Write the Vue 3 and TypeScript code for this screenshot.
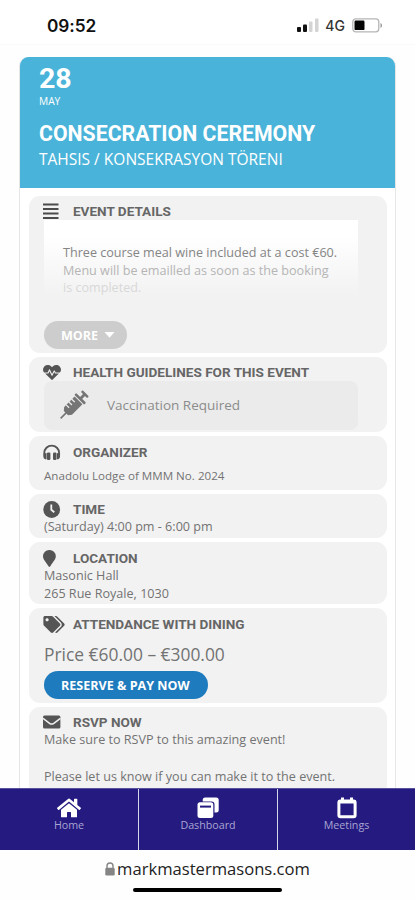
<script setup lang="ts">
interface Tab { label: string; icon: 'home' | 'dashboard' | 'meetings' }

const tabs: Tab[] = [
  { label: 'Home', icon: 'home' },
  { label: 'Dashboard', icon: 'dashboard' },
  { label: 'Meetings', icon: 'meetings' },
]
</script>

<template>
  <div class="screen">
    <header class="status">
      <span class="clock">09:52</span>
      <div class="signals">
        <svg class="bars" viewBox="0 0 22 14">
          <rect x="0" y="9" width="4" height="5" rx="1" fill="#111" />
          <rect x="6" y="6.500" width="4" height="7.500" rx="1" fill="#111" />
          <rect x="12" y="3.500" width="3.500" height="10.500" rx="1" fill="#d4d4d4" />
          <rect x="18" y="0.500" width="3.500" height="13.500" rx="1" fill="#d4d4d4" />
        </svg>
        <span class="net">4G</span>
        <svg class="battery" viewBox="0 0 32 15">
          <rect x="0.800" y="0.800" width="26" height="13" rx="3" fill="#fff" stroke="#b5b5b5" stroke-width="1.300" />
          <rect x="2.500" y="2.500" width="10" height="9.600" rx="1.200" fill="#050505" />
          <path d="M28.500 5v5c2-.8 2-4.200 0-5z" fill="#999" />
        </svg>
      </div>
    </header>

    <main class="event">
      <section class="hero">
        <div class="day">28</div>
        <div class="month">MAY</div>
        <h1>CONSECRATION CEREMONY</h1>
        <p class="subtitle">TAHSIS / KONSEKRASYON TÖRENI</p>
      </section>

      <div class="rows">
        <section class="row details">
          <h2>
            <svg class="icon" viewBox="0 0 18 16"><path d="M0 1h15.500M0 5.500h15.500M0 10h15.500M0 14.500h15.500" stroke="#4a4a4a" stroke-width="1.900" /></svg>
            <span>EVENT DETAILS</span>
          </h2>
          <div class="excerpt">
            <p class="l1">Three course meal wine included at a cost €60.</p>
            <p class="l2">Menu will be emailled as soon as the booking</p>
            <p class="l3">is completed.</p>
          </div>
          <button class="more"><span>MORE</span><svg viewBox="0 0 11 6"><path d="M.5 0h10L5.500 5.800z" fill="#fff" /></svg></button>
        </section>

        <section class="row health">
          <h2>
            <svg class="icon" viewBox="0 0 512 512" preserveAspectRatio="none"><path fill="#555" d="M320.200 243.800l-49.700 99.400c-6 12.100-23.400 11.700-28.900-.6l-56.900-126.300-30 71.700H60.600l182.500 186.500c7.100 7.300 18.600 7.300 25.700 0L451.400 288H342.300l-22.100-44.200zM473.700 73.900l-2.400-2.500c-51.500-52.600-135.800-52.600-187.400 0L256 100l-27.900-28.500c-51.500-52.700-135.900-52.700-187.400 0l-2.400 2.400C-10.400 123.700-12.500 203 31 256h102.400l35.900-86.200c5.400-12.900 23.600-13.100 29.400-.3l58.300 129.500 49-97.900c5.900-11.800 22.700-11.800 28.600 0l27.400 54.900H481c43.500-53 41.400-132.300-7.300-182.100z" /></svg>
            <span>HEALTH GUIDELINES FOR THIS EVENT</span>
          </h2>
          <div class="vaccine">
            <svg viewBox="0 0 30 30">
              <g transform="rotate(45 15 15)" fill="#757575">
                <rect x="10.500" y="-3" width="9" height="2.500" rx="1" />
                <rect x="13.600" y="-2" width="2.800" height="7" />
                <rect x="8" y="3.500" width="14" height="2.600" rx="1" />
                <path d="M9.500 7.200h11v14.800l-2.500 3h-6l-2.500-3z" />
                <path d="M14.200 24h1.600v8.500h-1.600z" />
                <path d="M9 11h4.500M9 15h4.500M9 19h4.500" stroke="#ebebeb" stroke-width="1.300" />
              </g>
            </svg>
            <span>Vaccination Required</span>
          </div>
        </section>

        <section class="row organizer">
          <h2>
            <svg class="icon" viewBox="0 0 18 16">
              <path d="M1.300 11V8.500a7.400 7.400 0 0 1 14.800 0V11" fill="none" stroke="#555" stroke-width="1.900" />
              <rect x="3.900" y="8" width="3.500" height="7.500" rx="1.200" fill="#555" />
              <rect x="10" y="8" width="3.500" height="7.500" rx="1.200" fill="#555" />
              <path d="M3.500 8.500C-.7 8.500-.7 14.800 3.500 14.800zM13.900 8.500c4.200 0 4.200 6.300 0 6.300z" fill="#555" />
            </svg>
            <span>ORGANIZER</span>
          </h2>
          <p class="lodge">Anadolu Lodge of MMM No. 2024</p>
        </section>

        <section class="row time">
          <h2>
            <svg class="icon" viewBox="0 0 18 17"><circle cx="8.700" cy="8.500" r="8.400" fill="#555" /><path d="M8.300 3.500v5.300l3 2.500" fill="none" stroke="#f2f2f2" stroke-width="1.800" /></svg>
            <span>TIME</span>
          </h2>
          <p class="hours">(Saturday) 4:00 pm - 6:00 pm</p>
        </section>

        <section class="row location">
          <h2>
            <svg class="icon" viewBox="0 0 18 17"><path d="M6.400 0A6.300 6.300 0 0 0 0 6.300c0 2.600 1.300 3.800 5.700 10.200q.7.800 1.400 0C11.500 10.100 12.800 8.900 12.800 6.300A6.300 6.300 0 0 0 6.400 0z" fill="#555" /></svg>
            <span>LOCATION</span>
          </h2>
          <p class="hall">Masonic Hall</p>
          <p class="street">265 Rue Royale, 1030</p>
        </section>

        <section class="row dining">
          <h2>
            <svg class="icon tags" viewBox="0 0 640 512"><path fill="#555" d="M497.941 225.941L286.059 14.059A48 48 0 0 0 252.118 0H48C21.490 0 0 21.490 0 48v204.118a48 48 0 0 0 14.059 33.941l211.882 211.882c18.744 18.745 49.136 18.746 67.882 0l204.118-204.118c18.745-18.745 18.745-49.137 0-67.882zM112 160c-26.510 0-48-21.490-48-48s21.490-48 48-48 48 21.490 48 48-21.490 48-48 48zm513.941 133.823L421.823 497.941c-18.745 18.745-49.137 18.745-67.882 0l-.36-.36L527.640 323.522c16.999-16.999 26.360-39.600 26.360-63.640s-9.362-46.641-26.360-63.640L331.397 0h48.721a48 48 0 0 1 33.941 14.059l211.882 211.882c18.745 18.745 18.745 49.137 0 67.882z" /></svg>
            <span>ATTENDANCE WITH DINING</span>
          </h2>
          <p class="price">Price €60.00 – €300.00</p>
          <button class="reserve"><span>RESERVE &amp; PAY NOW</span></button>
        </section>

        <section class="row rsvp">
          <h2>
            <svg class="icon" viewBox="0 0 18 14"><rect y="0" width="17.400" height="13" rx="1.500" fill="#555" /><path d="M0 2.800l6.600 5q2.100 1.500 4.200 0l6.600-5" fill="none" stroke="#f2f2f2" stroke-width="1.500" /></svg>
            <span>RSVP NOW</span>
          </h2>
          <p class="sure">Make sure to RSVP to this amazing event!</p>
          <p class="please">Please let us know if you can make it to the event.</p>
        </section>
      </div>
    </main>

    <nav class="tabs">
      <a v-for="tab in tabs" :key="tab.label" class="tab">
        <svg v-if="tab.icon === 'home'" viewBox="0 0 576 512"><path fill="#fff" d="M280.370 148.260L96 300.110V464a16 16 0 0 0 16 16l112.060-.29a16 16 0 0 0 15.920-16V368a16 16 0 0 1 16-16h64a16 16 0 0 1 16 16v95.640a16 16 0 0 0 16 16.050L464 480a16 16 0 0 0 16-16V300L295.670 148.260a12.190 12.190 0 0 0-15.300 0zM571.600 251.470L488 182.560V44.050a12 12 0 0 0-12-12h-56a12 12 0 0 0-12 12v72.610L318.470 43a48 48 0 0 0-61 0L4.340 251.470a12 12 0 0 0-1.600 16.900l25.500 31A12 12 0 0 0 45.150 301l235.220-193.740a12.190 12.190 0 0 1 15.300 0L530.900 301a12 12 0 0 0 16.900-1.600l25.500-31a12 12 0 0 0-1.700-16.930z" /></svg>
        <svg v-else-if="tab.icon === 'dashboard'" viewBox="0 0 24 22">
          <rect x="6.700" y="0.500" width="16" height="15" rx="2.500" fill="#fff" />
          <rect x="1" y="4.500" width="17.500" height="17" rx="3" fill="#241a80" />
          <rect x="1.500" y="5.200" width="15.800" height="15.800" rx="2.500" fill="#fff" />
          <path d="M4 9.600h11" stroke="#241a80" stroke-width="2" />
        </svg>
        <svg v-else viewBox="0 0 24 22">
          <rect x="3.900" y="4" width="16.200" height="15.800" rx="1.500" fill="none" stroke="#fff" stroke-width="3" />
          <path d="M3 5h18M7.500.5v4M16.500.5v4" stroke="#fff" stroke-width="3" />
        </svg>
        <span>{{ tab.label }}</span>
      </a>
    </nav>

    <footer class="address">
      <div class="url">
        <svg viewBox="0 0 10 14"><path d="M2 6V4a3 3 0 0 1 6 0v2" fill="none" stroke="#858585" stroke-width="1.400" /><rect x="0.300" y="5.800" width="9.400" height="7.800" rx="1.400" fill="#858585" /></svg>
        <span>markmastermasons.com</span>
      </div>
      <div class="handle"></div>
    </footer>
  </div>
</template>

<style>
body { background: #fefefe; }
</style>

<style scoped>
* { box-sizing: border-box; }
h1, h2, p { margin: 0; }
.screen { width: 415px; height: 900px; display: flex; flex-direction: column; overflow: hidden; background: #fefefe; font-family: "Open Sans", sans-serif; color: #737373; white-space: nowrap; }
.status { height: 45px; flex: none; display: flex; justify-content: space-between; padding: 16px 31px 0 47px; background: #fff; border-bottom: 1px solid #fafafa; }
.clock { font: 600 17.300px/20px Inter, sans-serif; color: #111; letter-spacing: -0.100px; }
.signals { display: flex; align-items: flex-start; }
.bars { width: 22px; height: 14px; margin-top: 2px; }
.net { font: 500 14px/20px Inter, sans-serif; color: #333; margin: 0 7px 0 6px; }
.battery { width: 32px; height: 15px; margin-top: 2px; }
.event { flex: 1; min-height: 0; margin: 12px 19px 0 19px; border: 1px solid #e6e6e6; border-width: 0 1px; border-radius: 9px 9px 0 0; overflow: hidden; background: #fff; }
.hero { height: 131px; margin: 0 -1px; background: #4ab3d9; color: #fff; padding: 6px 20px 0; }
.day { font: 700 28.500px/32px Roboto, sans-serif; }
.month { font-size: 10.200px; line-height: 13px; }
h1 { font: 700 21.270px/26px Roboto, sans-serif; margin-top: 13px; }
.subtitle { font-size: 15.500px; line-height: 22px; margin-top: 1px; }
.rows { display: flex; flex-direction: column; gap: 4px; padding: 8px 8px 0 9px; }
.row { flex: none; background: #f2f2f2; border-radius: 11px; padding: 7px 15px 0; }
.details { height: 157px; }
.health { height: 75px; }
.organizer { height: 54px; padding-top: 8px; }
.time { height: 44px; padding-top: 7px; }
.location { height: 62px; padding-top: 8px; }
.dining { height: 95px; padding-top: 8px; }
.rsvp { height: 100px; padding-top: 7px; }
h2 { height: 17px; display: flex; align-items: center; font: 700 13.550px/17px Roboto, sans-serif; color: #666; }
.icon { width: 18px; height: 17px; flex: none; margin: 0 12px 0 -1px; }
.tags { width: 22px; margin-right: 8px; }
.row p { font-size: 12.600px; line-height: 17.500px; }
.excerpt { width: 314px; height: 76px; padding: 24px 19px 0; background: linear-gradient(#fff 20%, #f2f2f2); }
.excerpt .l1 { color: #858585; }
.excerpt .l2 { color: #b5b5b5; }
.excerpt .l3 { color: #d8d8d8; }
button { display: flex; align-items: center; border: 0; color: #fff; font: 700 12.550px/17px "Open Sans", sans-serif; border-radius: 14px; height: 28px; }
.more { width: 83px; margin-top: 25px; padding: 0 0 0 17px; background: #cdcdcd; }
.more svg { width: 11px; height: 6px; margin-left: 6px; }
.vaccine { width: 314px; height: 49px; display: flex; align-items: center; background: #ebebeb; border-radius: 8px; font-size: 13.500px; color: #8c8c8c; }
.vaccine svg { width: 30px; height: 30px; margin: 0 19px 0 14px; overflow: visible; }
.vaccine span { padding-bottom: 2px; }
.row .lodge { font-size: 11.600px; margin-top: 6px; }
.row .price { font-size: 17.400px; line-height: 24px; margin-top: 9px; }
.reserve { width: 164px; margin-top: 5px; padding: 0 0 0 17px; background: #1e7bbd; }
.row .please { margin-top: 19px; }
.tabs { height: 62px; flex: none; display: grid; grid-template-columns: 139px 139px 137px; background: #241a80; border-top: 1px solid #57509c; }
.tab { display: flex; flex-direction: column; align-items: center; padding-top: 8px; border-right: 1px solid #d7d5ea; color: #a9a5d2; font-size: 10.700px; line-height: 15px; }
.tab:last-child { border-right: 0; }
.tab svg { width: 24px; height: 22px; margin-bottom: -1px; }
.address { height: 50px; flex: none; display: flex; flex-direction: column; align-items: center; padding-top: 8px; }
.url { display: flex; align-items: center; gap: 2px; color: #222; font-size: 16.600px; line-height: 22px; }
.url svg { width: 10px; height: 14px; }
.handle { width: 149px; height: 4px; margin-top: 8px; border-radius: 2px; background: #000; }
</style>
